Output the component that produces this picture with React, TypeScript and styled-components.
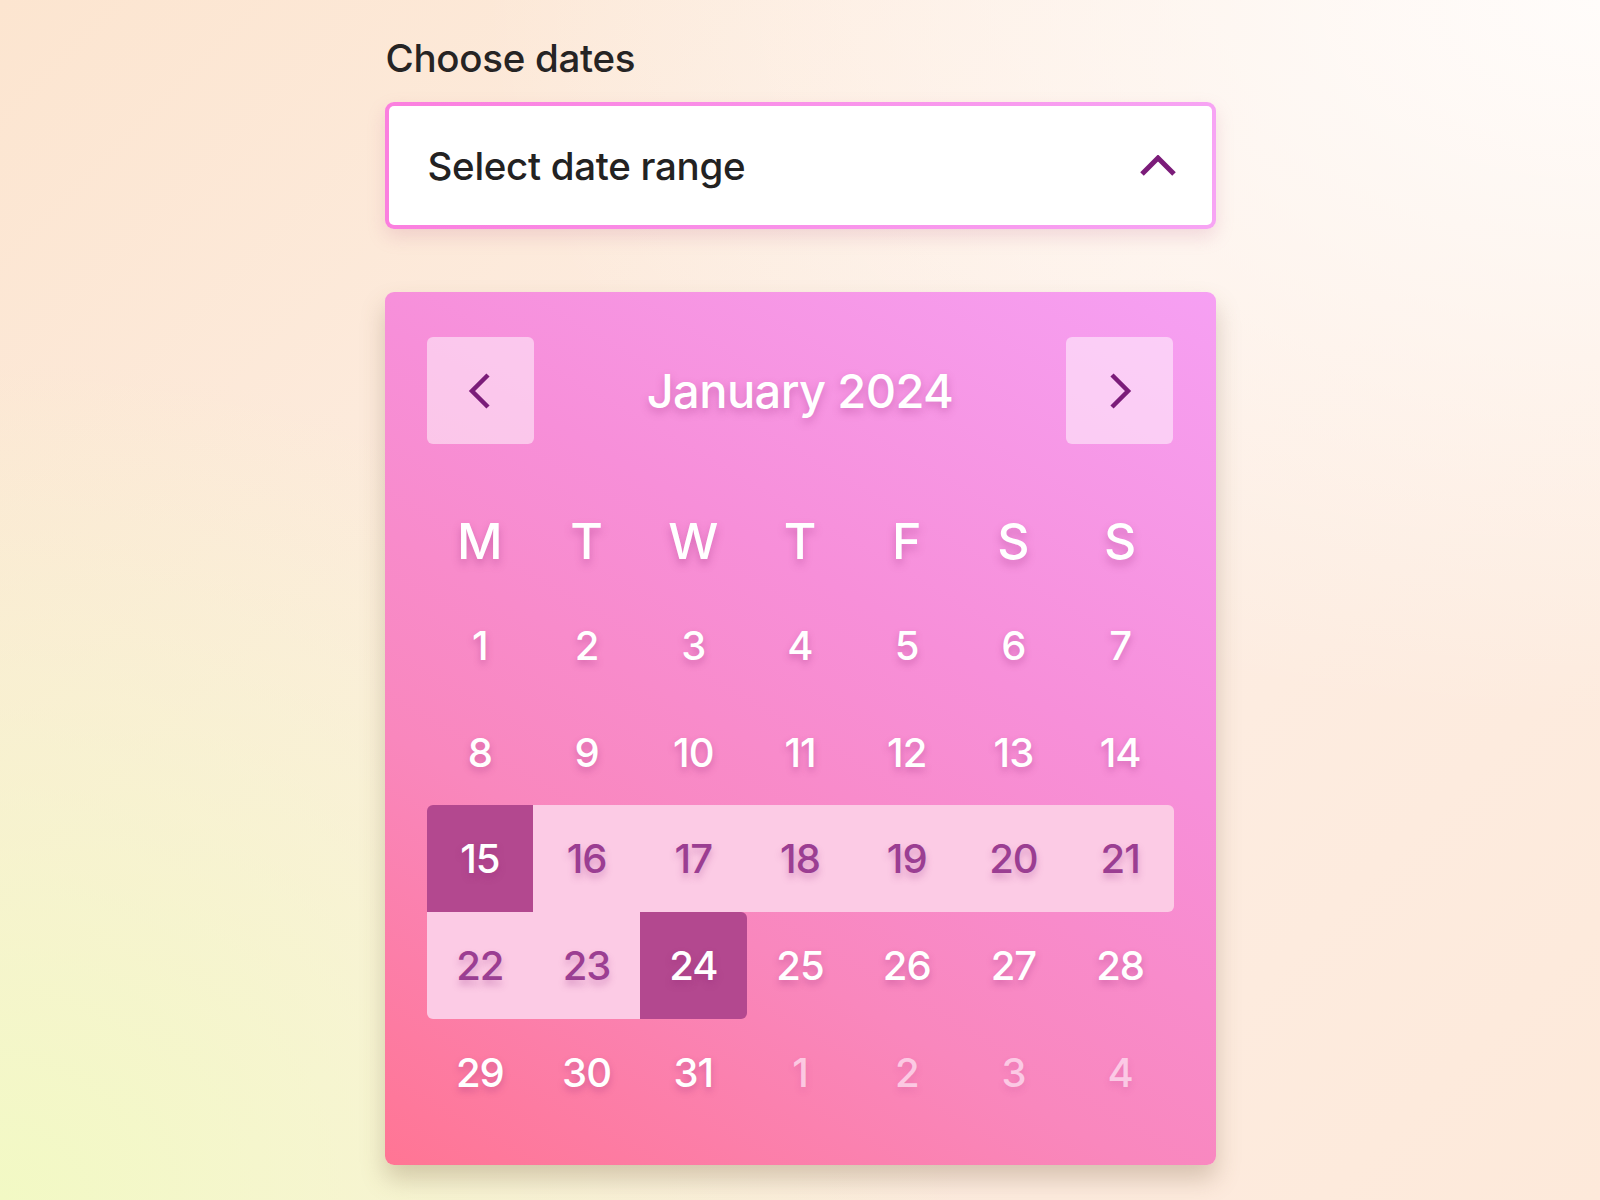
import React from "react";
import styled, { createGlobalStyle } from "styled-components";

const Global = createGlobalStyle`
  html, body { margin: 0; padding: 0; }
  body {
    font-family: "Inter", "Noto Sans", sans-serif;
    background: #fdeee0;
  }
`;

const Page = styled.div`
  min-height: 1200px;
  width: 1600px;
  box-sizing: border-box;
  padding-top: 36px;
  background:
    radial-gradient(ellipse 70% 60% at 100% 0%, rgba(255, 252, 250, 1) 0%, rgba(255, 250, 248, 0) 100%),
    radial-gradient(ellipse 60% 70% at 0% 100%, rgba(242, 249, 196, 1) 0%, rgba(242, 249, 196, 0) 100%),
    linear-gradient(135deg, #fce5d0 0%, #fdeee4 50%, #fde9da 100%);
  display: flex;
  justify-content: center;
`;

const Column = styled.div`
  width: 831px;
  display: flex;
  flex-direction: column;
`;

const Label = styled.div`
  font-size: 38.5px;
  font-weight: 500;
  color: #262424;
  letter-spacing: -0.3px;
  line-height: 44px;
  margin-left: 1px;
`;

const Select = styled.div`
  margin-top: 22px;
  height: 127px;
  box-sizing: border-box;
  border: 4px solid transparent;
  border-radius: 9px;
  background:
    linear-gradient(#ffffff, #ffffff) padding-box,
    linear-gradient(90deg, #fb7fdf 0%, #f7a4f4 100%) border-box;
  box-shadow: 0 8px 18px rgba(200, 120, 150, 0.22);
  display: flex;
  align-items: center;
  justify-content: space-between;
  padding: 0 36px 0 39px;
`;

const SelectText = styled.span`
  font-size: 38.5px;
  font-weight: 500;
  color: #232222;
  letter-spacing: -0.3px;
`;

const Calendar = styled.div`
  margin-top: 63px;
  border-radius: 9px;
  padding: 45px 42px 40px 42px;
  background:
    linear-gradient(30deg, #ff7594 0%, #f987bd 32%, #f78fd9 62%, #f6a0f3 100%);
  box-shadow: 0 14px 24px rgba(120, 90, 60, 0.28);
`;

const Header = styled.div`
  display: flex;
  align-items: center;
  justify-content: space-between;
  height: 107px;
  margin-bottom: 45px;
`;

const NavButton = styled.button`
  width: 107px;
  height: 107px;
  border: none;
  border-radius: 6px;
  background: rgba(255, 255, 255, 0.5);
  display: flex;
  align-items: center;
  justify-content: center;
  padding: 0;
  cursor: pointer;
`;

const Title = styled.div`
  font-size: 47px;
  font-weight: 500;
  color: #ffffff;
  letter-spacing: -0.6px;
  text-shadow: 0 4px 8px rgba(150, 40, 120, 0.35);
`;

const Grid = styled.div`
  display: grid;
  grid-template-columns: repeat(7, 1fr);
  grid-template-rows: 103px;
  grid-auto-rows: 106.7px;
`;

type Kind = "normal" | "range" | "selected" | "muted";

const Cell = styled.div<{ $kind: Kind; $radius: string }>`
  display: flex;
  align-items: center;
  justify-content: center;
  font-size: 40px;
  font-weight: 500;
  letter-spacing: -1px;
  border-radius: ${(p) => p.$radius};
  background: ${(p) =>
    p.$kind === "range"
      ? "#fccbe5"
      : p.$kind === "selected"
      ? "#b3488f"
      : "transparent"};
  color: ${(p) =>
    p.$kind === "range"
      ? "#9b3e92"
      : p.$kind === "muted"
      ? "rgba(255, 230, 245, 0.72)"
      : "#ffffff"};
  text-shadow: ${(p) =>
    p.$kind === "range"
      ? "0 5px 7px rgba(160, 60, 140, 0.35)"
      : p.$kind === "muted"
      ? "0 4px 7px rgba(180, 60, 140, 0.2)"
      : "0 4px 7px rgba(150, 40, 120, 0.35)"};
`;

const Weekday = styled.div`
  display: flex;
  align-items: center;
  justify-content: center;
  font-size: 50px;
  font-weight: 500;
  color: #ffffff;
  text-shadow: 0 5px 8px rgba(150, 40, 120, 0.35);
`;

const Chevron = ({ dir }: { dir: "left" | "right" | "up" }) => {
  if (dir === "up") {
    return (
      <svg width="36" height="22" viewBox="0 0 36 22">
        <path d="M2 19 L18 3 L34 19" fill="none" stroke="#7b1c79" strokeWidth="5" />
      </svg>
    );
  }
  const d = dir === "left" ? "M20 2 L4 18 L20 34" : "M4 2 L20 18 L4 34";
  return (
    <svg width="24" height="36" viewBox="0 0 24 36">
      <path d={d} fill="none" stroke="#7b1c79" strokeWidth="4.5" />
    </svg>
  );
};

const weekdays = ["M", "T", "W", "T", "F", "S", "S"];

type Day = { n: number; kind: Kind; radius?: string };

const days: Day[] = [];
for (let i = 1; i <= 31; i++) {
  let kind: Kind = "normal";
  let radius = "0";
  if (i === 15 || i === 24) kind = "selected";
  else if (i > 15 && i < 24) kind = "range";
  if (i === 15) radius = "6px 0 0 0";
  if (i === 21) radius = "0 6px 6px 0";
  if (i === 22) radius = "0 0 0 6px";
  if (i === 24) radius = "0 6px 6px 0";
  days.push({ n: i, kind, radius });
}
for (let i = 1; i <= 4; i++) days.push({ n: i, kind: "muted" });

export default function App() {
  return (
    <>
      <Global />
      <Page>
        <Column>
          <Label>Choose dates</Label>
          <Select>
            <SelectText>Select date range</SelectText>
            <Chevron dir="up" />
          </Select>
          <Calendar>
            <Header>
              <NavButton aria-label="Previous month">
                <Chevron dir="left" />
              </NavButton>
              <Title>January 2024</Title>
              <NavButton aria-label="Next month">
                <Chevron dir="right" />
              </NavButton>
            </Header>
            <Grid>
              {weekdays.map((w, i) => (
                <Weekday key={"w" + i}>{w}</Weekday>
              ))}
              {days.map((d, i) => (
                <Cell key={"d" + i} $kind={d.kind} $radius={d.radius || "0"}>
                  {d.n}
                </Cell>
              ))}
            </Grid>
          </Calendar>
        </Column>
      </Page>
    </>
  );
}
